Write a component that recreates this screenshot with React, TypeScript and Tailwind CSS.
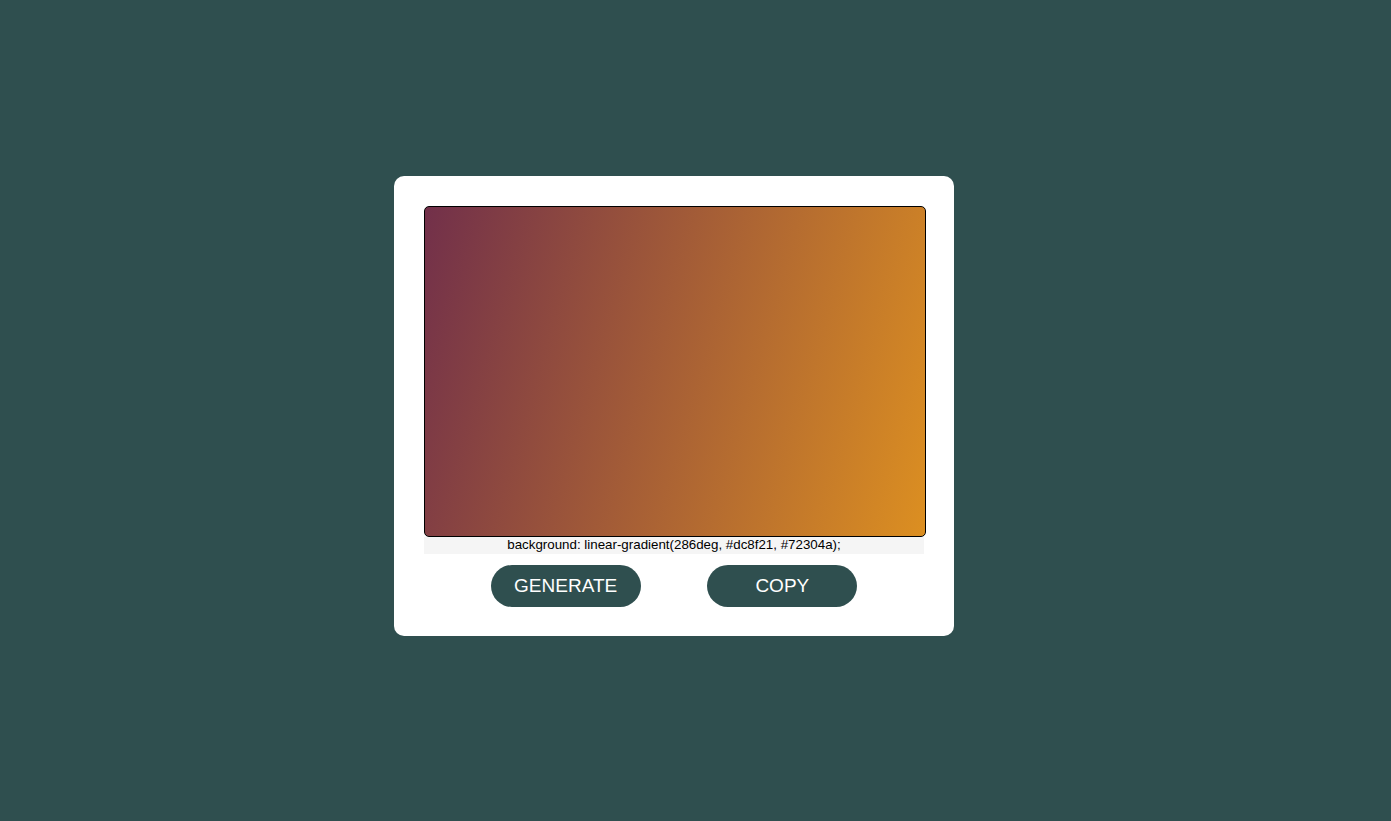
export default function App() {
  return (
    <div
      className="w-full h-[821px] bg-[#2f4f4f] pt-[176px] pl-[394px]"
      style={{ fontFamily: '"Liberation Sans", Arial, sans-serif' }}
    >
      <div className="w-[560px] h-[460px] bg-white rounded-[10px] pt-[30px] px-[30px] flex flex-col">
        <div
          className="w-[502px] h-[331px] border border-black rounded-[5px] shrink-0"
          style={{ background: "linear-gradient(286deg, #dc8f21, #72304a)" }}
        />
        <div className="w-[500px] h-[17px] bg-[#f5f5f5] text-[13.33px] leading-[16px] text-black text-center">
          background: linear-gradient(286deg, #dc8f21, #72304a);
        </div>
        <div className="w-[500px] flex justify-evenly mt-[11px]">
          <button className="w-[150px] h-[42px] rounded-full bg-[#2f4f4f] text-white text-[19px]">
            GENERATE
          </button>
          <button className="w-[150px] h-[42px] rounded-full bg-[#2f4f4f] text-white text-[19px]">
            COPY
          </button>
        </div>
      </div>
    </div>
  );
}
